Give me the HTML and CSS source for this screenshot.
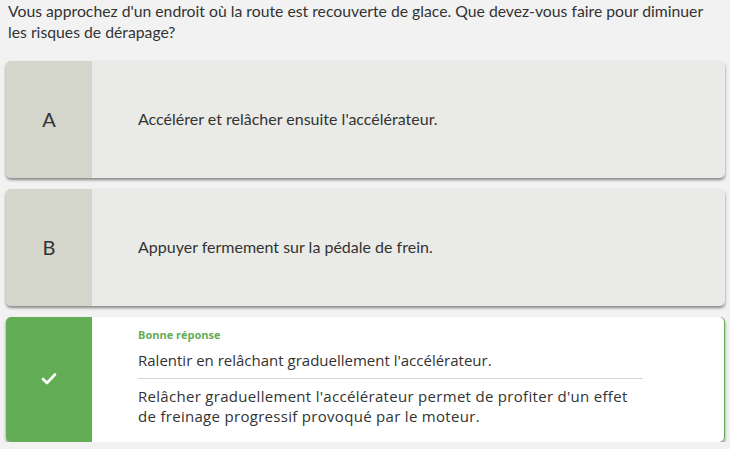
FILE: index.html
```html
<!DOCTYPE html>
<html lang="fr">
<head>
<meta charset="utf-8">
<link rel="stylesheet" href="styles.css">
</head>
<body>
<p class="question">Vous approchez d'un endroit où la route est recouverte de glace. Que devez-vous faire pour diminuer les risques de dérapage?</p>
<div class="options">
  <div class="card">
    <div class="letter">A</div>
    <div class="body"><span class="text">Accélérer et relâcher ensuite l'accélérateur.</span></div>
  </div>
  <div class="card">
    <div class="letter">B</div>
    <div class="body"><span class="text">Appuyer fermement sur la pédale de frein.</span></div>
  </div>
  <div class="card correct">
    <div class="letter check">
      <svg width="16" height="13" viewBox="0 0 16 13"><path d="M2 7 L6 11 L14 2.5" fill="none" stroke="#fff" stroke-width="2.6" stroke-linecap="round" stroke-linejoin="round"/></svg>
    </div>
    <div class="body answer">
      <div class="label">Bonne réponse</div>
      <div class="answer-text">Ralentir en relâchant graduellement l'accélérateur.</div>
      <div class="explain">Relâcher graduellement l'accélérateur permet de profiter d'un effet de freinage progressif provoqué par le moteur.</div>
    </div>
  </div>
</div>
</body>
</html>
```
FILE: styles.css
```css
html, body {
  margin: 0;
  padding: 0;
  background: #f2f2f2;
}
body {
  font-family: Lato, "Liberation Sans", sans-serif;
  color: #333;
}
.question {
  margin: 0;
  padding: 0 8px;
  font-size: 15.75px;
  line-height: 21px;
  color: #333;
}
.options {
  display: flex;
  flex-direction: column;
  gap: 11px;
  padding: 19px 5px 0 6px;
}
.card {
  display: flex;
  height: 117px;
  background: #eaebe7;
  border-radius: 5px;
  overflow: hidden;
  box-shadow: 0 2px 3px rgba(0,0,0,0.45);
}
.letter {
  width: 86px;
  flex: none;
  background: #d4d6cc;
  display: flex;
  align-items: center;
  justify-content: center;
  font-size: 20px;
  color: #333;
  padding-bottom: 2px;
  box-sizing: border-box;
}
.body {
  flex: 1;
  display: flex;
  align-items: center;
  padding: 0 82px 2px 46px;
  font-size: 16px;
  color: #333;
}
.correct {
  height: 125px;
  background: #fff;
  box-shadow: 0 2px 3px rgba(0,0,0,0.45), inset -1px 0 0 #63ad55;
}
.check {
  background: #63ad55;
}
.answer {
  flex-direction: column;
  align-items: stretch;
  justify-content: flex-start;
  padding-top: 11px;
  font-family: "Open Sans", "Noto Sans", sans-serif;
}
.label {
  font-size: 11px;
  font-weight: 700;
  color: #63ad55;
  line-height: 14px;
}
.answer-text {
  margin-top: 9px;
  font-size: 15px;
  line-height: 19px;
  padding-bottom: 8px;
  border-bottom: 1px solid #d4d6cc;
}
.explain {
  margin-top: 7px;
  font-size: 15px;
  line-height: 20px;
  letter-spacing: 0.3px;
}
```
